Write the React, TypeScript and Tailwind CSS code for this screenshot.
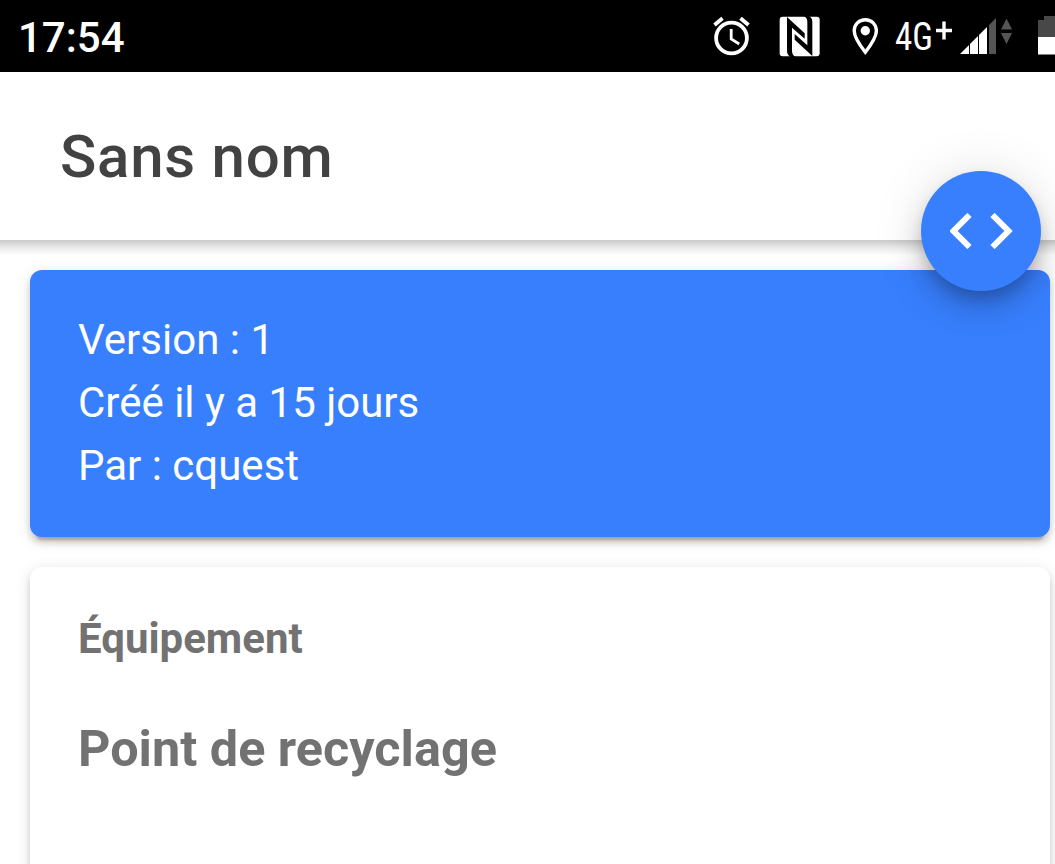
import React from "react";

const NfcIcon: React.FC<{ className?: string }> = ({ className }) => (
  <svg className={className} viewBox="0 0 123 123">
    <rect x="2" y="2" width="120" height="119" rx="9" fill="#fff" />
    <path
      d="M24 3L77 52V68L39 35V104Q39 117 50 123H35Q24 117 24 104ZM100 120L47 71V54L85 88V18Q85 5 74 0H89Q100 5 100 18Z"
      fill="#000"
    />
  </svg>
);

const StatusBar: React.FC = () => {
  return (
    <div className="flex h-[72px] shrink-0 items-center justify-between overflow-hidden bg-black text-white">
      <span className="pt-1 pl-[18px] text-[42px] leading-none font-medium">17:54</span>
      <div className="flex h-full w-[342px] shrink-0 items-center">
        {/* Alarm */}
        <svg className="mr-[28px] h-[42px] w-[38px] shrink-0" viewBox="0 0 38 42" fill="none" stroke="#fff">
          <circle cx="18.5" cy="23" r="15.4" strokeWidth="3.8" />
          <path d="M18.2 14v10l8 5" strokeWidth="2.8" />
          <path d="M1.5 10l8-6.8M27.5 3.2l8 6.8" strokeWidth="3.8" />
        </svg>
        <NfcIcon className="mr-[32px] h-[41px] w-[41px] shrink-0" />
        {/* Location */}
        <svg className="mr-[17px] h-[42px] w-[26px] shrink-0" viewBox="0 0 26 42">
          <path
            d="M13.3 4.7C7 4.7 2.2 9.5 2.2 15.8c0 7 6.2 15.2 11.1 21.4 4.9-6.2 11.1-14.4 11.1-21.4C24.4 9.5 19.6 4.7 13.3 4.7z"
            fill="none"
            stroke="#fff"
            strokeWidth="3.4"
          />
          <circle cx="13.3" cy="15.8" r="4.7" fill="#fff" />
        </svg>
        {/* Network type */}
        <span className="flex h-full w-[65px] shrink-0 items-center font-['Roboto_Condensed',Roboto,sans-serif] text-[38px] leading-none">
          <span className="w-[40px] origin-left scale-x-[0.92] pt-[2px]">4G</span>
          <svg className="h-[72px] w-[18px] shrink-0" viewBox="0 0 18 72" fill="none" stroke="#fff" strokeWidth="3.4">
            <path d="M1 30.5h16M9 21.5v18" />
          </svg>
        </span>
        {/* Signal strength and data arrows */}
        <svg className="h-[72px] w-[54px] shrink-0" viewBox="0 0 54 72">
          <path d="M0 54l9-9v9zM10 54V44l8-8v18zM19 54V35l8-8v27z" fill="#fff" />
          <path d="M29 54V25l7-7v36zM46.5 18.5l5.5 11H41zM46.5 44L41 33h11z" fill="#555" />
        </svg>
        {/* Battery */}
        <svg className="ml-auto h-[72px] w-[17px] shrink-0" viewBox="0 0 17 72">
          <path d="M0 37V20h6v-4h11v21z" fill="#484848" />
          <path d="M0 37h17v17.5H0z" fill="#fff" />
        </svg>
      </div>
    </div>
  );
};

const Header: React.FC = () => (
  <header className="relative h-[168px] shrink-0 bg-white px-[60px] pt-[50px]">
    <h1 className="text-[60px] leading-[70px] font-medium tracking-[0.75px] text-[#424242]">Sans nom</h1>
    {/* Bottom shadow of the toolbar */}
    <div className="absolute top-full left-0 h-[15px] w-full bg-linear-to-b from-[#c9c9c9] via-[#e8e8e8] via-45% to-white" />
    <button className="absolute top-[99px] left-[921px] z-10 flex h-[120px] w-[120px] items-center justify-center rounded-full bg-[#387ffe] shadow-[0_9px_15px_-3px_rgba(0,0,0,0.2),0_18px_30px_0_rgba(0,0,0,0.14),0_3px_54px_0_rgba(0,0,0,0.12)]">
      <svg className="h-[36px] w-[63px]" viewBox="0 0 63 36" fill="none" stroke="#fff" strokeWidth="6">
        <path d="M19.5 2L3.5 18l16 16M42.5 2l16 16-16 16" />
      </svg>
    </button>
  </header>
);

const App: React.FC = () => {
  return (
    <div className="flex h-[864px] w-[1055px] flex-col overflow-hidden bg-white font-[Roboto,sans-serif]">
      <StatusBar />
      <Header />
      <main className="px-[30px] pt-[30px]">
        <section className="h-[267px] w-[1020px] rounded-[12px] bg-[#387ffe] px-12 py-[38px] text-[42px] leading-[63px] text-white shadow-[0_6px_6px_0_rgba(0,0,0,0.14),0_9px_3px_-6px_rgba(0,0,0,0.2),0_3px_15px_0_rgba(0,0,0,0.12)]">
          <p>Version : 1</p>
          <p>Créé il y a 15 jours</p>
          <p>Par : cquest</p>
        </section>
        <section className="mt-[30px] h-[420px] w-[1020px] rounded-[12px] bg-white px-12 pt-10 text-[#727272] shadow-[0_6px_6px_0_rgba(0,0,0,0.14),0_9px_3px_-6px_rgba(0,0,0,0.2),0_3px_15px_0_rgba(0,0,0,0.12)]">
          <h2 className="text-[42px] leading-[63px] font-bold">Équipement</h2>
          <p className="mt-11 text-[50.4px] leading-[70px] font-bold">Point de recyclage</p>
        </section>
      </main>
    </div>
  );
};

export default App;
